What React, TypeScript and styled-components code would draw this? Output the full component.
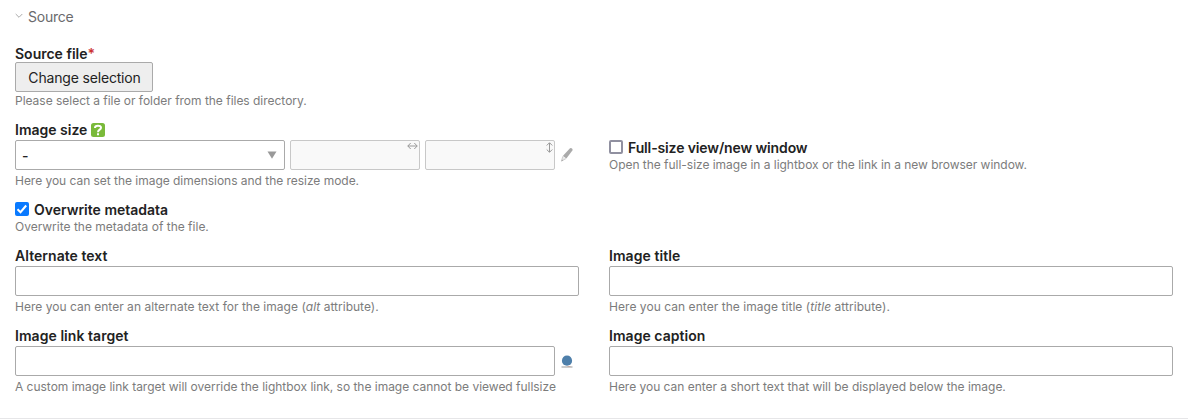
import React from 'react';
import styled, { createGlobalStyle } from 'styled-components';

const GlobalStyle = createGlobalStyle`
  * { box-sizing: border-box; }
  body {
    margin: 0;
    background: #fff;
    color: #222;
    font-family: Inter, "Liberation Sans", sans-serif;
    font-size: 14px;
  }
`;

const Panel = styled.fieldset`
  margin: 0;
  border: 0;
  border-bottom: 1px solid #e6e6e8;
  height: 419px;
  padding: 8px 15px 0;
`;

const Heading = styled.div`
  display: flex;
  align-items: center;
  gap: 5px;
  height: 18px;
  margin-bottom: 20px;
  color: #6a6a6c;
  line-height: 18px;
  letter-spacing: -0.25px;
  svg { margin-top: -2px; }
`;

const Fields = styled.div`
  display: grid;
  grid-template-columns: 1fr 1fr;
  column-gap: 30px;
  row-gap: 13px;
`;

const Field = styled.div<{ $wide?: boolean; $offset?: boolean }>`
  grid-column: ${p => (p.$wide ? '1 / -1' : 'auto')};
  padding-top: ${p => (p.$offset ? 18 : 0)}px;
  min-width: 0;
`;

const Label = styled.label<{ $track?: number }>`
  display: flex;
  align-items: center;
  height: 16px;
  line-height: 16px;
  font-weight: 600;
  white-space: nowrap;
  letter-spacing: ${p => p.$track ?? 0}px;
`;

const Required = styled.span`
  color: #c33;
`;

const Hint = styled.p<{ $near?: boolean; $track?: number }>`
  margin: ${p => (p.$near ? 1 : 3)}px 0 0;
  height: 16px;
  line-height: 16px;
  font-size: 12px;
  color: #7c7c7c;
  white-space: nowrap;
  letter-spacing: ${p => p.$track ?? -0.02}px;
`;

const Button = styled.button`
  display: block;
  width: 138px;
  height: 30px;
  padding: 0 0 0 1px;
  border: 1px solid #aaa;
  border-radius: 2px;
  background: #eee;
  color: #222;
  font: inherit;
  letter-spacing: -0.17px;
`;

const Controls = styled.div`
  display: flex;
  align-items: center;
  gap: 5px;
  margin-top: 2px;
  height: 30px;
`;

const Input = styled.input`
  flex: 1;
  min-width: 0;
  height: 30px;
  border: 1px solid #aaa;
  border-radius: 2px;
  background: #fff;
  outline: 0;
`;

const Select = styled.div`
  display: flex;
  align-items: center;
  justify-content: space-between;
  width: 270px;
  height: 30px;
  padding: 0 7px 0 6px;
  border: 1px solid #aaa;
  border-radius: 2px;
  font-weight: 500;
`;

const Dimension = styled.div`
  display: flex;
  justify-content: flex-end;
  width: 130px;
  height: 30px;
  border: 1px solid #c8c8c8;
  border-radius: 2px;
  background: #f9f9f9;
`;

const IconSlot = styled.span`
  display: flex;
  width: 19px;
  height: 30px;
  align-items: center;
`;

const Box = styled.span<{ $checked?: boolean }>`
  display: flex;
  width: 14px;
  height: 14px;
  margin: -2px 5px 0 0;
  border-radius: 2px;
  border: ${p => (p.$checked ? '0' : '2px solid #9090a0')};
  background: ${p => (p.$checked ? '#0a7aff' : '#fff')};
`;

const HelpBadge = styled.svg`
  margin-left: 4px;
`;

export default function App() {
  return (
    <>
      <GlobalStyle />
      <Panel>
        <Heading>
          <svg width="8" height="6" viewBox="0 0 8 6" fill="none" stroke="#aaa" strokeWidth="1">
            <path d="M.7 1 4 4.3 7.3 1" />
          </svg>
          Source
        </Heading>
        <Fields>
          <Field $wide>
            <Label>Source file<Required>*</Required></Label>
            <Button type="button">Change selection</Button>
            <Hint $near>Please select a file or folder from the files directory.</Hint>
          </Field>

          <Field>
            <Label>
              Image size
              <HelpBadge width="14" height="14" viewBox="0 0 14 14">
                <rect width="14" height="14" rx="2.5" fill="#7aba3a" />
                <path d="M4 4.9C4 1.9 10 1.9 10 4.8 10 6.8 7 6.5 7 9.2M7 10.2v2" fill="none" stroke="#fff" strokeWidth="2" />
              </HelpBadge>
            </Label>
            <Controls>
              <Select>
                <span>-</span>
                <svg width="10" height="8" viewBox="0 0 10 8"><path d="M.5.5h9L5 7.8z" fill="#999" /></svg>
              </Select>
              <Dimension>
                <svg width="12" height="11" viewBox="0 0 12 11" fill="none" stroke="#999">
                  <path d="M.8 5h9.4M3.7 2 .8 5l2.9 3M7.3 2l2.9 3-2.9 3" />
                </svg>
              </Dimension>
              <Dimension>
                <svg width="9" height="13" viewBox="0 0 9 13" fill="none" stroke="#999">
                  <path d="M4.5 2v9M1.7 4.5l2.8-2.8 2.8 2.8M1.7 8.5l2.8 2.8 2.8-2.8" />
                </svg>
              </Dimension>
              <IconSlot>
                <svg width="14" height="16" viewBox="0 0 14 16">
                  <path d="M10 1.3q.9-.7 2 .1t.4 2.1L6.4 11.5 2.8 9z" fill="#aaa" />
                  <path d="M2.7 9.4 1.6 14l4.4-2.4" fill="#e8e8e8" stroke="#bbb" strokeWidth=".7" />
                  <path d="m1.9 12.4-.5 2 1.9-.8z" fill="#aaa" />
                </svg>
              </IconSlot>
            </Controls>
            <Hint $track={-0.03}>Here you can set the image dimensions and the resize mode.</Hint>
          </Field>
          <Field $offset>
            <Label $track={-0.13}><Box />Full-size view/new window</Label>
            <Hint $near $track={-0.03}>Open the full-size image in a lightbox or the link in a new browser window.</Hint>
          </Field>

          <Field $wide>
            <Label>
              <Box $checked>
                <svg width="14" height="14" viewBox="0 0 14 14" fill="none" stroke="#fff" strokeWidth="2">
                  <path d="m2.5 7.2 3 3L11.2 3.5" />
                </svg>
              </Box>
              Overwrite metadata
            </Label>
            <Hint $near $track={0}>Overwrite the metadata of the file.</Hint>
          </Field>

          <Field>
            <Label $track={0.04}>Alternate text</Label>
            <Controls><Input /></Controls>
            <Hint $track={0.02}>Here you can enter an alternate text for the image (<em>alt</em> attribute).</Hint>
          </Field>
          <Field>
            <Label $track={0.06}>Image title</Label>
            <Controls><Input /></Controls>
            <Hint $track={0.05}>Here you can enter the image title (<em>title</em> attribute).</Hint>
          </Field>

          <Field>
            <Label $track={0.05}>Image link target</Label>
            <Controls>
              <Input />
              <IconSlot>
                <svg width="14" height="16" viewBox="0 0 14 16">
                  <path d="M1.5 13h11v2h-11z" fill="#ccc" />
                  <path d="M7.5 13h3v1h-3z" fill="#c9ada5" />
                  <circle cx="7" cy="7.7" r="5.1" fill="#4e7faa" />
                </svg>
              </IconSlot>
            </Controls>
            <Hint>A custom image link target will override the lightbox link, so the image cannot be viewed fullsize</Hint>
          </Field>
          <Field>
            <Label $track={0.04}>Image caption</Label>
            <Controls><Input /></Controls>
            <Hint>Here you can enter a short text that will be displayed below the image.</Hint>
          </Field>
        </Fields>
      </Panel>
    </>
  );
}
